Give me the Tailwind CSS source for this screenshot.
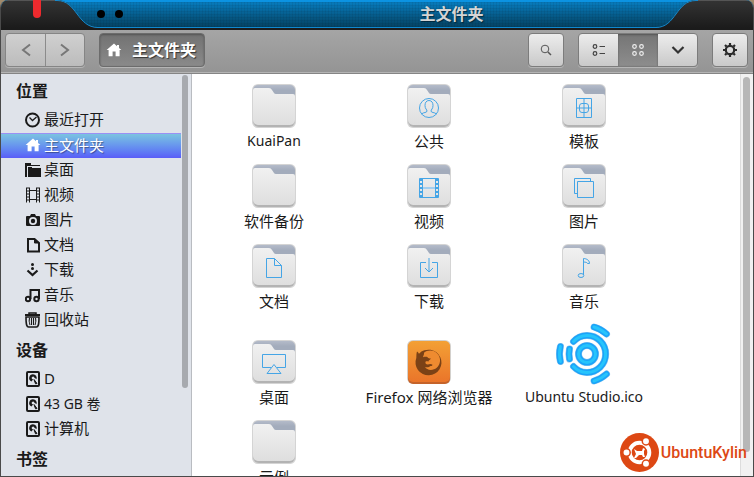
<!DOCTYPE html>
<html lang="zh-CN">
<head>
    <meta charset="UTF-8">
    <meta name="viewport" content="width=device-width, initial-scale=1.0">
    <title>主文件夹</title>
    <script src="https://cdn.jsdelivr.net/npm/@tailwindcss/browser@4"></script>
</head>
<body class="h-screen overflow-hidden bg-[#a08a6c] font-['Noto_Sans','Noto_Sans_CJK_SC',sans-serif] text-[15px] text-[#1a1a1a]">

    <!-- Shared icons -->
    <svg class="absolute size-0">
        <defs>
            <linearGradient id="folderFront" x1="0" y1="0" x2="0" y2="1">
                <stop offset="0" stop-color="#f1f1f1"/><stop offset="1" stop-color="#dedede"/>
            </linearGradient>
            <linearGradient id="folderBack" x1="0" y1="0" x2="0" y2="1">
                <stop offset="0" stop-color="#b4bbc9"/><stop offset=".3" stop-color="#a3acbc"/>
            </linearGradient>
            <linearGradient id="darkTab" x1="0" y1="0" x2="0" y2="1">
                <stop offset="0" stop-color="#343434"/><stop offset="1" stop-color="#1b1b1b"/>
            </linearGradient>
            <linearGradient id="orange" x1="0" y1="0" x2="0" y2="1">
                <stop offset="0" stop-color="#f3a035"/><stop offset="1" stop-color="#ea752a"/>
            </linearGradient>
        </defs>
        <symbol id="folder" viewBox="0 0 48 48">
            <rect x="2" y="2" width="44" height="44" rx="6" fill="#d4d4d4"/>
            <path d="M3 30h42v9a6 6 0 0 1-6 6H9a6 6 0 0 1-6-6z" fill="#b3b3b3"/>
            <path d="M3 20V8a5 5 0 0 1 5-5h32a5 5 0 0 1 5 5v12z" fill="url(#folderBack)"/>
            <path d="M3 8q0-2 2-2h14q2 0 3 2l2 3q.5 1 2 1h17q2 0 2 2v24a5 5 0 0 1-5 5H8a5 5 0 0 1-5-5z" fill="url(#folderFront)"/>
        </symbol>
        <symbol id="home" viewBox="0 0 16 16">
            <path d="M8 1.500 .6 8h2v6.200h4V9.500h3v4.700h4V8h1.800L13 6V3h-2v1.200z"/>
        </symbol>
        <symbol id="disk" viewBox="0 0 16 16">
            <rect x="2" y="1" width="12" height="14" rx="1" fill="none" stroke="currentColor" stroke-width="2"/>
            <path d="M8 3.200a3.800 3.800 0 0 0-1.500 7.300L8.200 8.200a1.300 1.300 0 1 1 1-1.700l2.300 1.800A3.800 3.800 0 0 0 8 3.200z"/>
            <path d="M9 8.500l3 4-1.500 .3z" stroke="currentColor"/>
        </symbol>
    </svg>

    <div class="flex h-full flex-col overflow-hidden rounded-t-lg border border-t-0 border-[#4a4a4a] bg-white">

        <!-- Title bar -->
        <header class="relative flex h-[30px] shrink-0 justify-between border-b-2 border-[#1b1b1b] bg-linear-to-b from-[#0781c6] to-[#04405f]">
            <div class="absolute inset-0 border-t-2 border-b border-t-[#0b93e2] border-b-[#0f88cf] bg-[repeating-linear-gradient(90deg,rgb(0_0_0/0.06)_0_1px,transparent_1px_3px),repeating-linear-gradient(0deg,rgb(0_0_0/0.06)_0_1px,transparent_1px_3px)]"></div>
            <svg class="relative h-[28px] w-[130px]" viewBox="0 0 130 28">
                <path d="M0 0H56C76 0 76 27.500 97 27.500V28H0z" fill="url(#darkTab)"/>
                <path d="M0 .5H56C76 .5 76 27.500 97 27.500" fill="none" stroke="#1689cc"/>
                <path d="M0 .5H54" stroke="#555"/>
                <path d="M32 0h8v14a4 4 0 0 1-8 0z" fill="#ee2a2e"/>
                <circle cx="100" cy="14" r="4"/><circle cx="118" cy="14" r="4"/>
            </svg>
            <h1 class="relative flex-1 pl-[116px] text-center text-base leading-[29px] font-bold text-[#d5d5d5] [text-shadow:1px_1px_1px_#00000080]">主文件夹</h1>
            <svg class="relative h-[28px] w-[97px]" viewBox="0 0 97 28">
                <path d="M97 0H40C20 0 20 27.500 0 27.500V28H97z" fill="url(#darkTab)"/>
                <path d="M97 .5H40C20 .5 20 27.500 0 27.500" fill="none" stroke="#1689cc"/>
                <path d="M97 .5H42" stroke="#555"/>
            </svg>
        </header>

        <!-- Toolbar -->
        <div class="flex h-[44px] shrink-0 items-start justify-between border-b border-[#858585] bg-linear-to-b from-[#a5a5a5] to-[#949494] pt-[3px] pr-[5px] pl-1 shadow-[inset_0_-1px_0_#b4b4b4]">
            <div class="flex">
                <div class="flex h-[34px] overflow-hidden rounded border border-[#858585] bg-linear-to-b from-[#d0d0d0] to-[#bcbcbc] shadow-[0_1px_0_#b5b5b5]">
                    <button aria-label="后退" class="grid w-10 place-items-center border-r border-[#8b8b8b]">
                        <svg class="size-4" viewBox="0 0 16 16" fill="none" stroke="#777" stroke-width="2"><path d="M12 2.500 5 8l7 5.500"/></svg>
                    </button>
                    <button aria-label="前进" class="grid w-[38px] place-items-center">
                        <svg class="size-4" viewBox="0 0 16 16" fill="none" stroke="#777" stroke-width="2"><path d="M4 2.500 11 8l-7 5.500"/></svg>
                    </button>
                </div>
                <button class="ml-[14px] flex h-[34px] w-[106px] items-center rounded border border-[#6c6c6c] bg-linear-to-b from-[#727272] to-[#8a8a8a] pl-[6px] text-base font-bold text-white shadow-[inset_0_1px_2px_#555,0_1px_0_#b5b5b5] [text-shadow:1px_1px_1px_#333]">
                    <svg class="mr-[10px] size-4" fill="white"><use href="#home"/></svg>主文件夹
                </button>
            </div>
            <div class="flex gap-[14px]">
                <button aria-label="搜索" class="grid h-[34px] w-9 place-items-center rounded border border-[#7c7c7c] bg-linear-to-b from-[#ededed] to-[#c9c9c9] shadow-[0_1px_0_#b5b5b5]">
                    <svg class="size-4" viewBox="0 0 16 16" fill="none" stroke="#555"><circle cx="7" cy="7" r="3.800"/><path d="m10 10 3 3" stroke-width="1.500"/></svg>
                </button>
                <div class="flex h-[34px] overflow-hidden rounded border border-[#7c7c7c] bg-linear-to-b from-[#ededed] to-[#c9c9c9] shadow-[0_1px_0_#b5b5b5]">
                    <button aria-label="列表视图" class="grid w-[39px] place-items-center">
                        <svg class="size-4" viewBox="0 0 16 16" fill="none" stroke="#444" stroke-width="1.200"><circle cx="4" cy="4.500" r="1.800"/><circle cx="4" cy="11.500" r="1.800"/><path d="M8.500 4.500H14M8.500 11.500H14"/></svg>
                    </button>
                    <button aria-label="图标视图" class="grid w-10 place-items-center bg-linear-to-b from-[#757575] to-[#8d8d8d] shadow-[inset_0_1px_2px_#555]">
                        <svg class="size-4" viewBox="0 0 16 16" fill="none" stroke="#eee" stroke-width="1.200"><circle cx="4.500" cy="4.500" r="1.800"/><circle cx="11.500" cy="4.500" r="1.800"/><circle cx="4.500" cy="11.500" r="1.800"/><circle cx="11.500" cy="11.500" r="1.800"/></svg>
                    </button>
                    <button aria-label="视图选项" class="grid w-[39px] place-items-center">
                        <svg class="size-4" viewBox="0 0 16 16" fill="none" stroke="#333" stroke-width="2.200"><path d="m2.500 5 5.500 5.500L13.500 5"/></svg>
                    </button>
                </div>
                <button aria-label="设置" class="grid h-[34px] w-9 place-items-center rounded border border-[#7c7c7c] bg-linear-to-b from-[#ededed] to-[#c9c9c9] shadow-[0_1px_0_#b5b5b5]">
                    <svg class="size-4" viewBox="0 0 16 16" fill="none" stroke="#2b2b2b"><circle cx="8" cy="8" r="4.200" stroke-width="2.200"/><path d="M8 1v2M8 13v2M1 8h2M13 8h2M3 3l1.500 1.500M11.500 11.500 13 13M3 13l1.500-1.500M11.500 4.500 13 3" stroke-width="2.200"/></svg>
                </button>
            </div>
        </div>

        <div class="flex min-h-0 flex-1">
            <!-- Sidebar -->
            <aside class="flex w-[191px] shrink-0 border-r border-[#b9bcc1] bg-[#dfe3ea]">
                <nav class="flex-1 overflow-hidden">
                    <h2 class="pl-[15px] text-base leading-[34px] font-bold">位置</h2>
                    <a href="#" class="flex h-[25px] items-center gap-[3px] pb-0.5 pl-6">
                        <svg class="size-4" viewBox="0 0 16 16" fill="none" stroke="currentColor"><circle cx="7.500" cy="8" r="6.500" stroke-width="2"/><path d="m4.500 5.500 3 3 4-3.500" stroke-width="1.300"/></svg>最近打开
                    </a>
                    <a href="#" class="flex h-[25px] items-center gap-[3px] border-t border-[#9a90f5] bg-linear-to-b from-[#7cc3e0] to-[#5a5cf8] pb-0.5 pl-6 text-white [text-shadow:1px_1px_1px_#00000066]">
                        <svg class="size-4" fill="currentColor"><use href="#home"/></svg>主文件夹
                    </a>
                    <a href="#" class="flex h-[25px] items-center gap-[3px] pb-0.5 pl-6">
                        <svg class="size-4" viewBox="0 0 16 16" fill="currentColor"><path d="M0 1h6v2h9v1H2v11H0z"/><path d="M3 5h4v1h9v9H3z"/></svg>桌面
                    </a>
                    <a href="#" class="flex h-[25px] items-center gap-[3px] pb-0.5 pl-6">
                        <svg class="size-4" viewBox="0 0 16 16" fill="none" stroke="currentColor"><path d="M1.500 .5v15M4.500 .5v15M11.500 .5v15M14.500 .5v15"/><path d="M3 .5v15M13 .5v15" stroke-width="2" stroke-dasharray="1 2"/><path d="M4 3.500h8M4 12.500h8"/></svg>视频
                    </a>
                    <a href="#" class="flex h-[25px] items-center gap-[3px] pb-0.5 pl-6">
                        <svg class="size-4" viewBox="0 0 16 16" fill="currentColor"><path fill-rule="evenodd" d="M2 4h3l1-2h4l1 2h3q1 0 1 1v8q0 1-1 1H2q-1 0-1-1V5q0-1 1-1zM8 5a4 4 0 1 0 0 8 4 4 0 0 0 0-8z"/><circle cx="8" cy="9" r="2.200"/></svg>图片
                    </a>
                    <a href="#" class="flex h-[25px] items-center gap-[3px] pb-0.5 pl-6">
                        <svg class="size-4" viewBox="0 0 16 16" fill="none" stroke="currentColor" stroke-width="2"><path d="M3 2h6.500L14 6v8.500H3z"/><path d="M9.500 2v4H14" fill="currentColor" stroke-width="1"/></svg>文档
                    </a>
                    <a href="#" class="flex h-[25px] items-center gap-[3px] pb-0.5 pl-6">
                        <svg class="size-4" viewBox="0 0 16 16" fill="currentColor"><circle cx="7.500" cy="2.500" r="1.500"/><circle cx="7.500" cy="6.500" r="1.500"/><path d="m2.500 8.500 5 4.500 5-4.500" fill="none" stroke="currentColor" stroke-width="2.200"/></svg>下载
                    </a>
                    <a href="#" class="flex h-[25px] items-center gap-[3px] pb-0.5 pl-6">
                        <svg class="size-4" viewBox="0 0 16 16" fill="none" stroke="currentColor" stroke-width="2"><circle cx="3" cy="12" r="2.200"/><circle cx="11.500" cy="12" r="2.200"/><path d="M5.500 12V3H14v9"/></svg>音乐
                    </a>
                    <a href="#" class="flex h-[25px] items-center gap-[3px] pb-0.5 pl-6">
                        <svg class="size-4" viewBox="0 0 16 16" fill="none" stroke="currentColor"><path d="M0 3h15" stroke-width="2"/><path d="M4 2V1h7v1" stroke-width="1.500"/><path d="M1 5c0 9 1 10 2.500 10h8c1.500 0 2.500-1 2.500-10z" stroke-width="1.600"/><path d="M4.500 6q-1 3.500.5 7M6.500 6v7M8.500 6v7M10.500 6q1 3.500-.5 7" stroke-width="1.100"/></svg>回收站
                    </a>
                    <h2 class="pl-[15px] text-base leading-[34px] font-bold">设备</h2>
                    <a href="#" class="flex h-[25px] items-center gap-[3px] pb-0.5 pl-6">
                        <svg class="size-4" fill="currentColor"><use href="#disk"/></svg><span>D</span>
                    </a>
                    <a href="#" class="flex h-[25px] items-center gap-[3px] pb-0.5 pl-6">
                        <svg class="size-4" fill="currentColor"><use href="#disk"/></svg><span class="text-sm">43 GB 卷</span>
                    </a>
                    <a href="#" class="flex h-[25px] items-center gap-[3px] pb-0.5 pl-6">
                        <svg class="size-4" fill="currentColor"><use href="#disk"/></svg>计算机
                    </a>
                    <h2 class="pl-[15px] text-base leading-[34px] font-bold">书签</h2>
                </nav>
                <div class="w-[10px] pt-px pl-px">
                    <div class="h-[78%] w-[6px] rounded-full bg-[#a7aaaf]"></div>
                </div>
            </aside>

            <!-- Files -->
            <main class="relative flex min-w-0 flex-1 bg-white">
                <div class="grid flex-1 grid-cols-[repeat(auto-fill,154px)] content-start items-end gap-x-px gap-y-[10px] overflow-hidden pt-2 pl-[5px] text-center leading-[22px]">
                    <a href="#" class="flex flex-col items-center">
                        <svg class="size-12"><use href="#folder"/></svg>
                        <span class="text-sm leading-[22px]">KuaiPan</span>
                    </a>
                    <a href="#" class="flex flex-col items-center">
                        <svg class="size-12" viewBox="0 0 48 48" fill="none" stroke="#45a5e6"><use href="#folder" stroke="none"/><circle cx="24" cy="26" r="9.500"/><path d="M16.500 32c2-2 5.500-1 5.500-3 0-1.500-2-2-2-5.500 0-2.500 1-5 4-5s4 2.500 4 5c0 3.500-2 4-2 5.500 0 2 3.500 1 5.500 3"/></svg>
                        <span>公共</span>
                    </a>
                    <a href="#" class="flex flex-col items-center">
                        <svg class="size-12" viewBox="0 0 48 48" fill="none" stroke="#45a5e6"><use href="#folder" stroke="none"/><path d="M16.500 16.500h15v19h-15zM24 16v20M16 26h16"/><rect x="19.500" y="21.500" width="9" height="9" rx="2.500"/></svg>
                        <span>模板</span>
                    </a>
                    <a href="#" class="flex flex-col items-center">
                        <svg class="size-12"><use href="#folder"/></svg>
                        <span>软件备份</span>
                    </a>
                    <a href="#" class="flex flex-col items-center">
                        <svg class="size-12" viewBox="0 0 48 48" fill="none" stroke="#45a5e6"><use href="#folder" stroke="none"/><path d="M14.500 16.500h19v19h-19zM17.500 16v20M30.500 16v20"/><path d="M18 26h12" stroke="#a3cff0" stroke-width="2"/><path d="M16 17v19M32 17v19" stroke-width="2" stroke-dasharray="2 2"/></svg>
                        <span>视频</span>
                    </a>
                    <a href="#" class="flex flex-col items-center">
                        <svg class="size-12" viewBox="0 0 48 48" fill="none" stroke="#45a5e6"><use href="#folder" stroke="none"/><path d="M17 31.500h-2.500v-15h16V19M17.500 19.500h16v16h-16z"/></svg>
                        <span>图片</span>
                    </a>
                    <a href="#" class="flex flex-col items-center">
                        <svg class="size-12" viewBox="0 0 48 48" fill="none" stroke="#45a5e6"><use href="#folder" stroke="none"/><path d="M16.500 16.500h8l7 7v12h-15zM24.500 16.500v7h7"/></svg>
                        <span>文档</span>
                    </a>
                    <a href="#" class="flex flex-col items-center">
                        <svg class="size-12" viewBox="0 0 48 48" fill="none" stroke="#45a5e6"><use href="#folder" stroke="none"/><path d="M21 20.500h-5.500v15h17v-15H27M24 16v14M20 26l4 4 4-4"/></svg>
                        <span>下载</span>
                    </a>
                    <a href="#" class="flex flex-col items-center">
                        <svg class="size-12" viewBox="0 0 48 48" fill="none" stroke="#45a5e6"><use href="#folder" stroke="none"/><path d="M23.500 33V16.500c1 0 6 .5 6 5h-2c0-1-2-1.500-4-1.500"/><ellipse cx="21" cy="33.500" rx="2.800" ry="2"/></svg>
                        <span>音乐</span>
                    </a>
                    <a href="#" class="flex flex-col items-center">
                        <svg class="size-12" viewBox="0 0 48 48" fill="none" stroke="#45a5e6"><use href="#folder" stroke="none"/><path d="M21 29.500h-8.500v-13h23v13H27M24 26.500l-7 9h14z"/></svg>
                        <span>桌面</span>
                    </a>
                    <a href="#" class="flex flex-col items-center whitespace-nowrap">
                        <svg class="size-12" viewBox="0 0 48 48">
                            <rect x="2" y="2" width="44" height="44" rx="6" fill="#d3d0cc"/>
                            <rect x="3" y="4" width="42" height="42" rx="5" fill="#c5632a"/>
                            <rect x="3" y="3" width="42" height="41" rx="5" fill="url(#orange)"/>
                            <path fill="#7b4216" d="M12 13.500c1 .5 1.500 1.500 2 2.200A13 12.800 0 1 1 11.300 20c.2-2.500 0-4.500.7-6.500z"/>
                            <path fill="#ee8b30" d="M19 14.800c3-2.800 9-3 12.500 0 3.500 3 4.700 8 2.500 12-1.300 2.500-3 4-5 4.500-4 1.500-7.500 0-9-2.300 2.500.8 4 .2 5.500-1 1.500 0 2-.5 1.800-1.500-1.500-1-3-.5-4.500 0-1.800 0-2.700-1.500-2.300-2.800.8-.9 2-.5 3-.2 0-1.500 2-1.700 2.500-3-1.500 0-3-.2-3.700-1.500-.8-.2-2.300-.3-4.300.2.3-1.700 1.300-2.500 1-4.400z"/>
                        </svg>
                        <span>Firefox 网络浏览器</span>
                    </a>
                    <a href="#" class="flex flex-col items-center whitespace-nowrap">
                        <svg class="size-16" viewBox="0 0 64 64" fill="none" stroke-linecap="round">
                            <g stroke="#8fc4ec" stroke-width="7">
                                <circle cx="35" cy="32" r="8.500"/><path d="M21.500 19.500A18.500 18.500 0 1 1 21.500 44.500M17.500 27Q16.500 32 17.500 37M8.400 24.500Q6.500 32 8.400 39.500M42 5Q49 7 54.500 12M54.500 52Q49 57 42 59"/>
                            </g>
                            <g stroke="#1ba4f9" stroke-width="6">
                                <circle cx="35" cy="32" r="8.500"/><path d="M21.500 19.500A18.500 18.500 0 1 1 21.500 44.500M17.500 27Q16.500 32 17.500 37M8.400 24.500Q6.500 32 8.400 39.500M42 5Q49 7 54.500 12M54.500 52Q49 57 42 59"/>
                            </g>
                            <g stroke="#26c4fc" stroke-width="3">
                                <circle cx="35" cy="32" r="8.500"/><path d="M21.500 19.500A18.500 18.500 0 1 1 21.500 44.500M17.500 27Q16.500 32 17.500 37M8.400 24.500Q6.500 32 8.400 39.500M42 5Q49 7 54.500 12M54.500 52Q49 57 42 59"/>
                            </g>
                        </svg>
                        <span class="text-sm leading-[22px]">Ubuntu Studio.ico</span>
                    </a>
                    <a href="#" class="flex flex-col items-center">
                        <svg class="size-12"><use href="#folder"/></svg>
                        <span>示例</span>
                    </a>
                </div>
                <div class="w-[13px] shrink-0 border-l border-[#dcdcdc] bg-[#f1f1f1] pt-[3px] pl-[2px]">
                    <div class="h-[94%] w-[7px] rounded-full bg-[#b7b7b7]"></div>
                </div>

                <!-- Watermark -->
                <div class="absolute right-[6px] bottom-1 flex items-center gap-[2px] text-[#dd4814]">
                    <svg class="size-[39px]" viewBox="0 0 39 39">
                        <circle cx="19.500" cy="19.500" r="19.500" fill="#dd4814"/>
                        <circle cx="19.500" cy="19.500" r="9.800" fill="none" stroke="white" stroke-width="4"/>
                        <g fill="white" stroke="#dd4814" stroke-width="1.500"><circle cx="6.500" cy="19.500" r="3.700"/><circle cx="26" cy="8.200" r="3.700"/><circle cx="26" cy="30.800" r="3.700"/></g>
                        <path d="M14 16l3 2h5l1-3 2 1-1 2v3l1 3h-2l-1-2h-3l-3 3h-2l2-4z" fill="white"/>
                    </svg>
                    <span class="font-['Roboto',sans-serif] text-base font-medium">UbuntuKylin</span>
                </div>
            </main>
        </div>
    </div>

</body>
</html>
